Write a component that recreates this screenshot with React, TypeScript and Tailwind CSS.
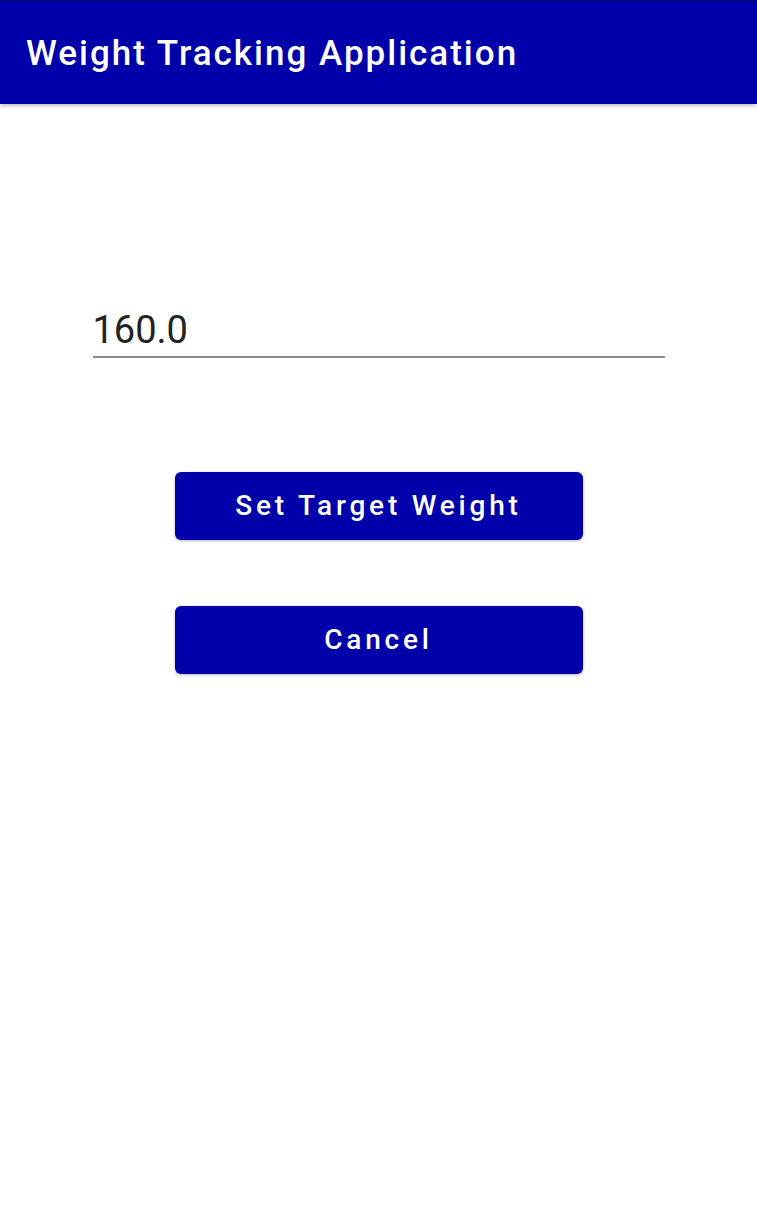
import React from "react";

export default function App() {
  return (
    <div className="w-[757px] h-[1222px] bg-white" style={{ fontFamily: "Roboto, 'Liberation Sans', sans-serif" }}>
      <div className="h-[104px] bg-[#0000aa] border-t border-[#000066] flex items-center px-[26px] shadow-[0_2px_4px_rgba(0,0,0,0.25)] relative z-10">
        <span className="text-white text-[35px] font-medium tracking-[2px] leading-none mt-[2px]">Weight Tracking Application</span>
      </div>
      <div className="flex flex-col items-center">
        <div className="mt-[207px] w-[572px] border-b-2 border-[#8a8a8a] pb-[7px]">
          <span className="text-[38px] text-[#222222] leading-none block">160.0</span>
        </div>
        <button className="mt-[114px] w-[408px] h-[68px] rounded-[6px] bg-[#0000aa] text-white text-[28px] font-medium tracking-[3.8px] shadow-[0_1px_3px_rgba(0,0,0,0.3)]">
          Set Target Weight
        </button>
        <button className="mt-[66px] w-[408px] h-[68px] rounded-[6px] bg-[#0000aa] text-white text-[28px] font-medium tracking-[3.8px] shadow-[0_1px_3px_rgba(0,0,0,0.3)]">
          Cancel
        </button>
      </div>
    </div>
  );
}
